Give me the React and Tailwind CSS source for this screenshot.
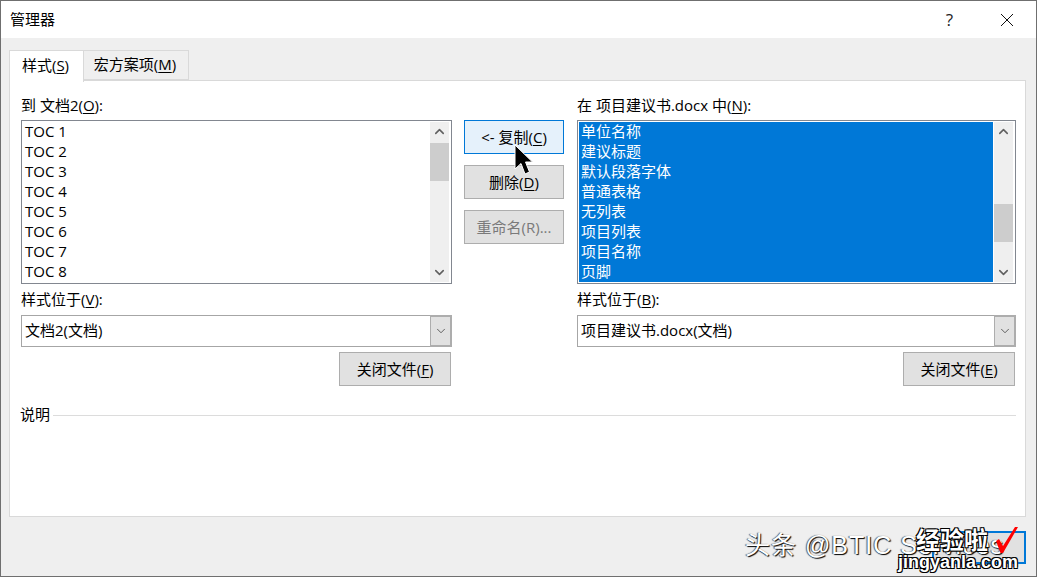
import React from 'react';
import { ChevronUp, ChevronDown } from 'lucide-react';

const leftItems = ['TOC 1', 'TOC 2', 'TOC 3', 'TOC 4', 'TOC 5', 'TOC 6', 'TOC 7', 'TOC 8'];
const rightItems = ['单位名称', '建议标题', '默认段落字体', '普通表格', '无列表', '项目列表', '项目名称', '页脚'];

function ListBox({ items, selected, thumbTop, width }) {
  return (
    <div className={`flex h-[164px] border border-[#828790] bg-white py-px pl-px pr-[2px] ${width}`}>
      <div className={`flex-1 overflow-hidden ${selected ? 'bg-[#0078d7] text-white' : 'text-black'}`}>
        {items.map((item) => (
          <div key={item} className="h-5 pl-[2px] leading-[18px]">{item}</div>
        ))}
      </div>
      <div className="relative ml-px flex w-[19px] flex-col items-center justify-between bg-[#efefef] py-[2px]">
        <ChevronUp className="h-[15px] w-[15px] text-[#606060]" strokeWidth={2.5} />
        <div className={`absolute left-0 h-[38px] w-full bg-[#cdcdcd] ${thumbTop}`} />
        <ChevronDown className="h-[15px] w-[15px] text-[#606060]" strokeWidth={2.5} />
      </div>
    </div>
  );
}

function Combo({ value }) {
  return (
    <div className="flex h-8 w-full border border-[#a6a6a6] bg-white">
      <div className="flex-1 pl-[3px] leading-[28px] text-black">{value}</div>
      <div className="-my-px -mr-px flex w-[22px] items-center justify-center border-y-2 border-r-2 border-l border-[#adadad] bg-[#e1e1e1]">
        <ChevronDown className="h-[14px] w-[14px] text-[#303030]" strokeWidth={1.25} />
      </div>
    </div>
  );
}

function Btn({ children, variant = 'normal', className = '' }) {
  const look = {
    normal: 'border-[#adadad] bg-[#e1e1e1] text-black',
    hover: 'border-[#0078d7] bg-[#e5f1fb] text-black',
    disabled: 'border-[#adadad] bg-[#e1e1e1] text-[#7a7a7a]',
  }[variant];
  return (
    <div className={`flex h-[34px] items-center justify-center border ${look} ${className}`}>
      {children}
    </div>
  );
}

function Hot({ children }) {
  return <span className="underline underline-offset-2">{children}</span>;
}

export default function App() {
  return (
    <div
      className="relative flex h-[577px] w-[1037px] flex-col overflow-hidden border border-[#6f6f6f] text-[15px] text-[#1a1a1a]"
      style={{ fontFamily: '"Open Sans", "Noto Sans CJK SC", sans-serif' }}
    >
      {/* Title bar */}
      <div className="flex h-[37px] shrink-0 items-center bg-white pl-[9px]">
        <span className="text-[15px] text-black">管理器</span>
        <span className="ml-auto mr-[47px] text-[17px] text-[#222]">?</span>
        <svg className="mr-[22px] h-[14px] w-[14px]" viewBox="0 0 14 14" fill="none" stroke="#111" strokeWidth="1">
          <path d="M1 1 13 13M13 1 1 13" />
        </svg>
      </div>

      <div className="flex flex-1 flex-col bg-[#efefef] pl-2 pr-[10px] pt-[10px]">
        {/* Tabs */}
        <div className="relative z-10 flex h-8 items-end">
          <div className="-mb-[2px] flex h-8 w-[75px] items-center justify-center border border-b-0 border-[#d9d9d9] bg-white pb-[2px] pr-[2px] text-black">
            样式(<Hot>S</Hot>)
          </div>
          <div className="flex h-[30px] w-[105px] items-center justify-center border border-l-0 border-[#d9d9d9] bg-[#efefef] pb-[2px] pr-[2px] text-black">
            宏方案项(<Hot>M</Hot>)
          </div>
        </div>

        {/* Panel */}
        <div className="flex h-[437px] flex-col border border-[#d9d9d9] bg-white pl-[11px] pr-[9px]">
          <div className="flex">
            <div className="flex w-[431px] flex-col">
              <div className="h-[39px] pt-[14px] leading-5 text-black">到 文档2(<Hot>O</Hot>):</div>
              <ListBox items={leftItems} thumbTop="top-[21px]" width="w-[431px]" />
              <div className="h-[31px] pt-[5px] leading-5 text-black">样式位于(<Hot>V</Hot>):</div>
              <Combo value="文档2(文档)" />
              <div className="mt-[5px] flex justify-end pr-px">
                <Btn className="w-[112px]">关闭文件(<Hot>F</Hot>)</Btn>
              </div>
            </div>

            <div className="ml-3 flex w-[100px] flex-col gap-[11px] pt-[39px]">
              <Btn variant="hover">&lt;- 复制(<Hot>C</Hot>)</Btn>
              <Btn>删除(<Hot>D</Hot>)</Btn>
              <Btn variant="disabled">重命名(R)...</Btn>
            </div>

            <div className="ml-[13px] flex w-[439px] flex-col">
              <div className="h-[39px] pt-[14px] leading-5 text-black">在 项目建议书.docx 中(<Hot>N</Hot>):</div>
              <ListBox items={rightItems} selected thumbTop="top-[82px]" width="w-[439px]" />
              <div className="h-[31px] pt-[5px] leading-5 text-black">样式位于(<Hot>B</Hot>):</div>
              <Combo value="项目建议书.docx(文档)" />
              <div className="mt-[5px] flex justify-end pr-px">
                <Btn className="w-[112px]">关闭文件(<Hot>E</Hot>)</Btn>
              </div>
            </div>
          </div>

          {/* 说明 */}
          <div className="mt-[19px] flex h-5 items-center gap-[3px] text-black">
            <span className="-mt-[2px] -ml-px leading-5">说明</span>
            <div className="h-px flex-1 bg-[#dcdcdc]" />
          </div>
        </div>

        {/* Footer */}
        <div className="flex flex-1 justify-end pt-[14px]">
          <div className="h-[33px] w-[94px] border-2 border-[#0078d7] bg-[#e1e1e1]" />
        </div>
      </div>

      {/* Mouse cursor */}
      <svg className="absolute left-[513px] top-[143px] h-[32px] w-[20px]" viewBox="0 0 20 32">
        <path d="M1 1V25L7 19.500 11 30 15.500 28 11.500 18H18.500Z" fill="#000" stroke="#fff" strokeWidth="1" />
      </svg>

      {/* Watermarks */}
      <div
        className="absolute left-[744px] top-[526px] whitespace-nowrap text-[25px] leading-9 tracking-[1px] text-white"
        style={{ fontFamily: '"Liberation Sans", "Noto Sans CJK SC", sans-serif', textShadow: '1px 1px 1px #000, -1px 0 1px #555' }}
      >
        头条 @BTIC Services
      </div>
      <div
        className="absolute left-[915px] top-[523px] text-[24px] font-bold leading-8 text-white"
        style={{ textShadow: '1px 1px 0 #000, -1px -1px 0 #000, 1px -1px 0 #000, -1px 1px 0 #000' }}
      >
        经验啦
      </div>
      <div
        className="absolute left-[897px] top-[551px] text-[18px] font-bold leading-5 text-white"
        style={{ fontFamily: '"Liberation Sans", sans-serif', textShadow: '1px 1px 0 #000, -1px -1px 0 #000, 1px -1px 0 #000, -1px 1px 0 #000' }}
      >
        jingyanla.com
      </div>
      <svg className="absolute left-[993px] top-[524px] h-[30px] w-[24px]" viewBox="0 0 24 30">
        <path d="M2 16 5 14 9 21 21 2H24L9 28H6.500Z" fill="#f00" />
      </svg>
    </div>
  );
}
